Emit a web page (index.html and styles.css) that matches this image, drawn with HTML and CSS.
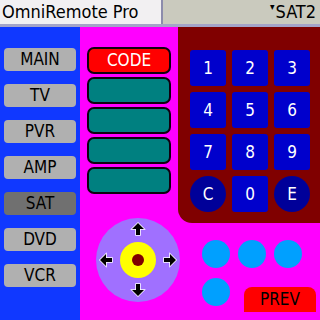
FILE: index.html
```html
<!DOCTYPE html>
<html lang="en">
<head>
  <meta charset="UTF-8">
  <title>OmniRemote Pro</title>
  <link rel="stylesheet" href="styles.css">
</head>
<body>
  <div class="screen">
    <!-- Title bar -->
    <div class="titlebar">
      <div class="title">OmniRemote Pro</div>
      <div class="picker"><span class="tri">&#9662;</span>SAT2</div>
    </div>

    <div class="main">
      <!-- Device list -->
      <div class="devices">
        <div class="dev">MAIN</div>
        <div class="dev">TV</div>
        <div class="dev">PVR</div>
        <div class="dev">AMP</div>
        <div class="dev active">SAT</div>
        <div class="dev">DVD</div>
        <div class="dev">VCR</div>
      </div>

      <div class="work">
        <div class="top">
          <div class="codes">
            <div class="code red">CODE</div>
            <div class="code"></div>
            <div class="code"></div>
            <div class="code"></div>
            <div class="code"></div>
          </div>

          <div class="keypad">
            <div class="key">1</div>
            <div class="key">2</div>
            <div class="key">3</div>
            <div class="key">4</div>
            <div class="key">5</div>
            <div class="key">6</div>
            <div class="key">7</div>
            <div class="key">8</div>
            <div class="key">9</div>
            <div class="key round">C</div>
            <div class="key">0</div>
            <div class="key round">E</div>
          </div>
        </div>

        <div class="bottom">
          <svg class="dpad" width="84" height="86" viewBox="0 0 84 86">
            <circle cx="42" cy="43" r="42" fill="#a070ff"/>
            <circle cx="42" cy="43" r="18" fill="#ffff00"/>
            <circle cx="42" cy="43" r="6" fill="#800000"/>
            <g fill="#000" stroke="#fff" stroke-width="1.5" stroke-linejoin="miter" paint-order="stroke">
              <path d="M0 -6 L6 0 L2 0 L2 6 L-2 6 L-2 0 L-6 0 Z" transform="translate(42 12)"/>
              <path d="M0 -6 L6 0 L2 0 L2 6 L-2 6 L-2 0 L-6 0 Z" transform="translate(42 73) rotate(180)"/>
              <path d="M0 -6 L6 0 L2 0 L2 6 L-2 6 L-2 0 L-6 0 Z" transform="translate(10 43) rotate(-90)"/>
              <path d="M0 -6 L6 0 L2 0 L2 6 L-2 6 L-2 0 L-6 0 Z" transform="translate(74 43) rotate(90)"/>
            </g>
          </svg>

          <div class="extras">
            <div class="row">
              <div class="dot"></div>
              <div class="dot"></div>
              <div class="dot"></div>
            </div>
            <div class="row">
              <div class="dot"></div>
              <div class="prev">PREV</div>
            </div>
          </div>
        </div>
      </div>
    </div>
  </div>
</body>
</html>
```

FILE: styles.css
```css
body {
  margin: 0;
  font-family: "DejaVu Sans Condensed", "DejaVu Sans", sans-serif;
  font-stretch: condensed;
}

.screen {
  width: 320px;
  height: 320px;
  display: flex;
  flex-direction: column;
  overflow: hidden;
}

.titlebar {
  height: 24px;
  display: flex;
  border-bottom: 3px solid #a4a4c8;
}

.title {
  width: 159px;
  background-color: #f2f0f2;
  border-right: 2px solid #8c8cac;
  font-size: 18px;
  line-height: 24px;
  padding-left: 2px;
  color: #000;
}

.picker {
  flex: 1;
  background-color: #cacabe;
  text-align: right;
  font-size: 18px;
  line-height: 24px;
  padding-right: 4px;
  color: #000;
}

.tri {
  font-size: 10px;
  vertical-align: top;
  line-height: 14px;
  margin-right: 1px;
}

.main {
  flex: 1;
  display: flex;
}

.devices {
  width: 80px;
  background-color: #1038ff;
  display: flex;
  flex-direction: column;
  align-items: center;
  gap: 13px;
  padding-top: 21px;
  box-sizing: border-box;
}

.dev {
  width: 72px;
  height: 23px;
  background-color: #b0b0b0;
  border-radius: 4px;
  text-align: center;
  font-size: 17px;
  line-height: 23px;
  color: #000;
}

.dev.active {
  background-color: #707070;
}

.work {
  flex: 1;
  background-color: #ff00ff;
  display: flex;
  flex-direction: column;
}

.top {
  display: flex;
  height: 196px;
}

.codes {
  width: 98px;
  padding: 20px 0 0 7px;
  box-sizing: border-box;
  display: flex;
  flex-direction: column;
  gap: 3px;
}

.code {
  width: 84px;
  height: 27px;
  box-sizing: border-box;
  background-color: #008080;
  border: 2px solid #100010;
  border-radius: 7px;
  color: #fff;
  text-align: center;
  font-size: 17px;
  line-height: 23px;
}

.code.red {
  background-color: #ff0000;
}

.keypad {
  flex: 1;
  background-color: #800000;
  border-bottom-left-radius: 14px;
  padding: 23px 10px 0 12px;
  display: grid;
  grid-template-columns: repeat(3, 36px);
  grid-auto-rows: 36px;
  gap: 6px;
  align-content: start;
}

.key {
  background-color: #0000cc;
  border-radius: 3px;
  color: #fff;
  text-align: center;
  font-size: 17px;
  line-height: 36px;
}

.key.round {
  background-color: #000099;
  border-radius: 50%;
}

.bottom {
  flex: 1;
  display: flex;
}

.dpad {
  display: block;
  margin: -6px 0 0 16px;
}

.extras {
  margin: 17px 0 0 22px;
  display: flex;
  flex-direction: column;
  gap: 10px;
}

.row {
  display: flex;
  align-items: flex-start;
  gap: 8px;
}

.dot {
  width: 28px;
  height: 28px;
  border-radius: 50%;
  background-color: #00a0ff;
}

.prev {
  width: 72px;
  height: 25px;
  margin: 9px 0 0 6px;
  background-color: #ff0000;
  border-radius: 8px 8px 0 0;
  color: #000;
  text-align: center;
  font-size: 17px;
  line-height: 25px;
}
```
